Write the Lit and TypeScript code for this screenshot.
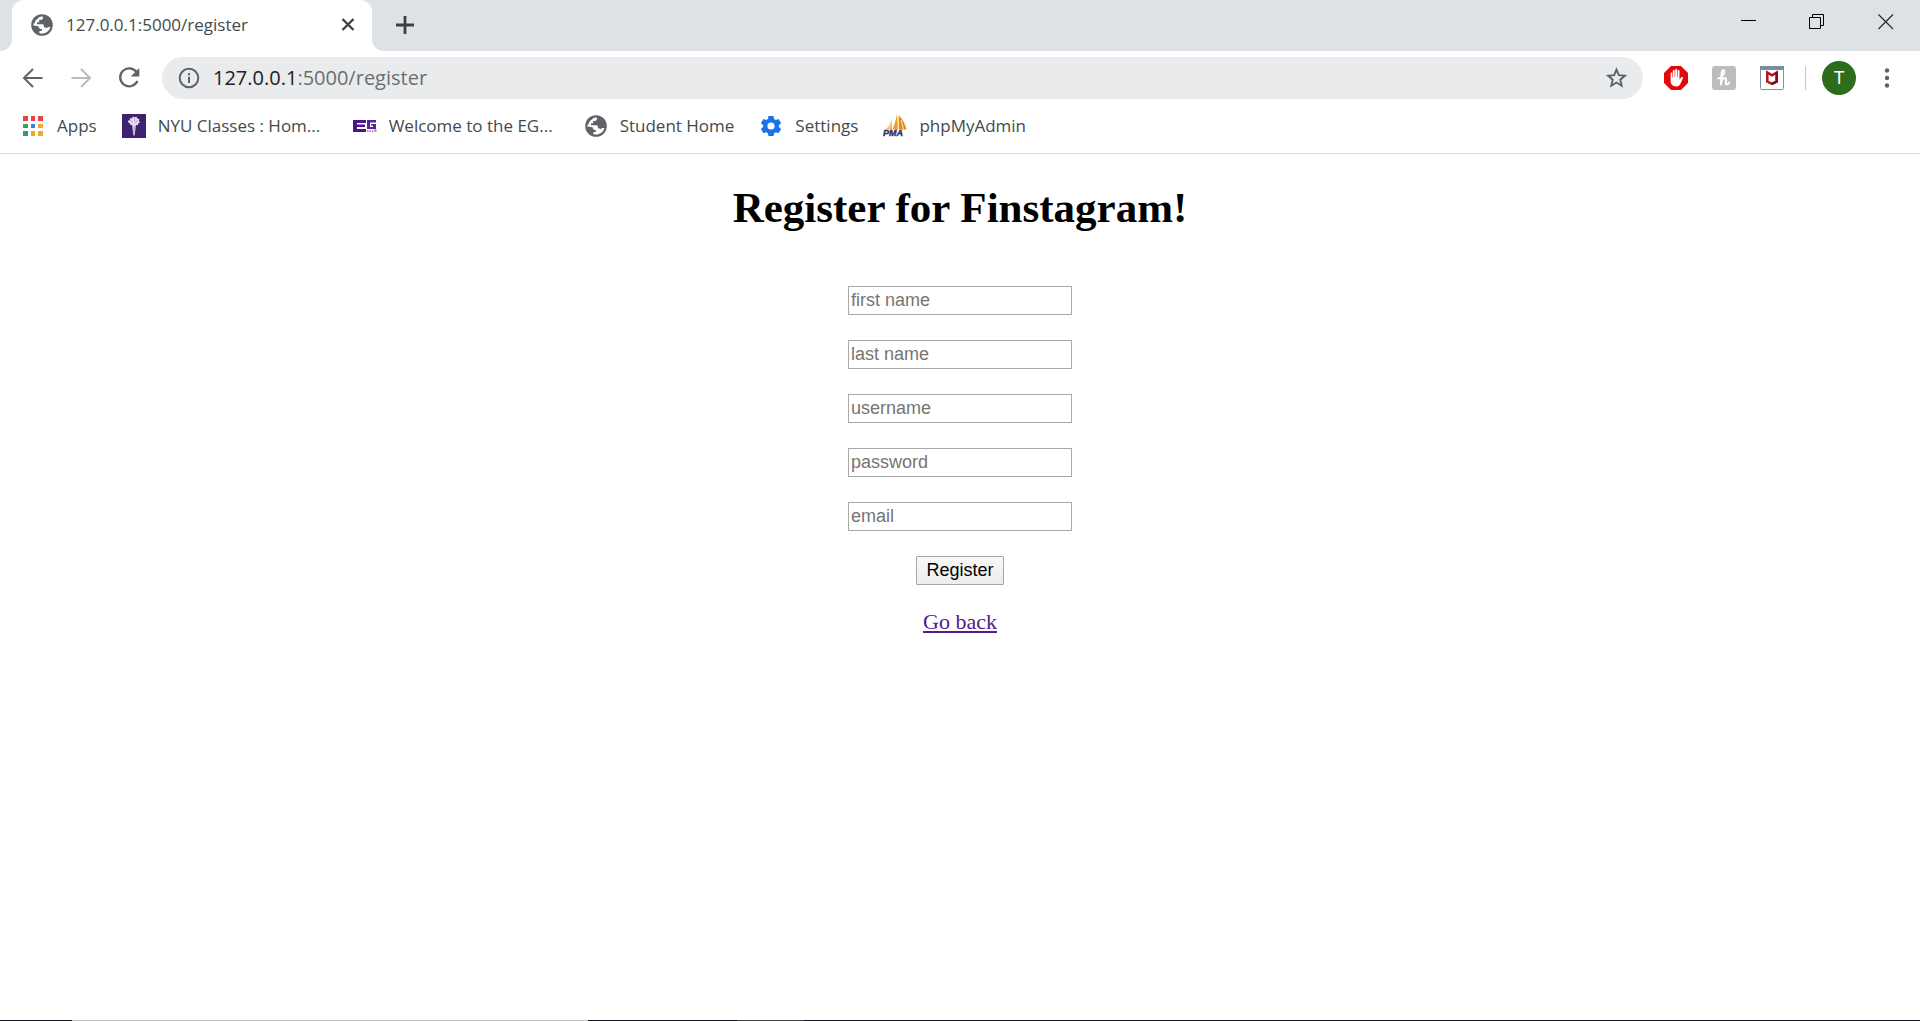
import { LitElement, html, css, svg, nothing } from "lit";
import { customElement, property } from "lit/decorators.js";

const globe = svg`
  <svg viewBox="0 0 24 24" width="24" height="24" aria-hidden="true">
    <circle cx="12" cy="12" r="10.8" fill="#5f6368" />
    <path fill="#fff" d="M12.800 3.400c.7 2-.3 3.600-2.300 3.600H9.200v2.300H7v1.900h5.300c1 0 1.600.6 1.600 1.500v1.500c1.200 0 2 .2 2.500 1 .9-.9 2.300-1.400 4-1.200-1 3.800-4.400 6.600-8.400 6.600-1 0-1.800-.1-2.600-.4v-2.300h2.400v-1.800c-1.900 0-3.200-1.100-3.200-2.900L3.400 12.600C3.100 7.600 7.200 3.200 12.800 3.400z" />
    <path fill="#5f6368" d="M3.200 10.500C3.900 6.600 6.300 4.300 9 3.600L8.400 5.300C6 6.300 4.700 8.400 4.600 10.500z" />
  </svg>`;

const appsIcon = svg`
  <svg viewBox="0 0 24 24" width="24" height="24" aria-hidden="true">
    <g fill="#ea4048"><path d="M2 2h5v5H2zM10 2h4v5h-4zM17 2h5v5h-5z" /></g>
    <g fill="#34a05a"><path d="M2 10h5v4H2zM2 17h5v5H2z" /></g>
    <path fill="#2a86dc" d="M10 10h4v4h-4z" />
    <g fill="#f4a825"><path d="M17 10h5v4h-5zM10 17h4v5h-4zM17 17h5v5h-5z" /></g>
  </svg>`;

const torchIcon = svg`
  <svg viewBox="0 0 24 24" width="24" height="24" aria-hidden="true">
    <path fill="#3f2170" d="M0 0h24v24H0z" />
    <path fill="#c9bedb" d="M10 11h4l-1.300 10.500h-1.400z" />
    <path fill="#e6dff0" d="M6.200 6.500 8 6.200 7.800 4l2 .4L11 2.300l1.600 1.300 1.700-1 .9 2 2.200.3-.6 2 1.500 1.400-1.900 1-.6 1.900-2.100-.2-1.700 1.200-1.600-1.300-2.100.2-.4-1.900-2-.9z" />
    <path stroke="#a794c4" fill="none" d="M8.500 6.500l2.500 2M12.500 4.500v3M15.500 6.500l-2 2.500" />
  </svg>`;

const egIcon = svg`
  <svg viewBox="0 0 24 24" width="24" height="24" aria-hidden="true">
    <path fill="#4b148a" d="M0 6h13v3H4v1.500h8v2.500H4v2h9v3H0z" />
    <path fill="#5a2496" d="M14 6h9v2.500h-6V13h3v-1.500h-2V10h5v5h-9z" />
    <path stroke="#a98cc9" stroke-width="2" fill="none" d="M14 17h1.500M16.500 17H18M19 17h1.500M22.500 15v3" />
  </svg>`;

const gearIcon = svg`
  <svg viewBox="0 0 24 24" width="24" height="24" aria-hidden="true">
    <path fill="#1a73e8" fill-rule="evenodd" d="M9.500 2h5l.6 2.900 1.700 1 2.800-1 2.500 4.300-2.200 1.900v1.900l2.200 1.900-2.500 4.300-2.800-1-1.700 1-.6 2.800h-5l-.6-2.800-1.700-1-2.800 1-2.500-4.300L4.100 13v-1.900L1.900 9.200l2.500-4.300 2.800 1 1.700-1zM12 8.400a3.600 3.600 0 1 0 0 7.200 3.600 3.600 0 0 0 0-7.200z" />
  </svg>`;

const pmaIcon = svg`
  <svg viewBox="0 0 24 24" width="24" height="24" aria-hidden="true">
    <path fill="#f3ae55" d="M8.500 3c.2 4-1.500 9-6 12.500H9z" />
    <path fill="#f39a1f" d="M14 0c-1 5-2.500 11-4.500 15.500H15z" />
    <path fill="#e88a12" d="M15.500 1.500c4 3 6.500 8.500 8 14H16z" />
    <path stroke="#fbe3c0" fill="none" d="M6 14.500l2-7M18 6l2.500 9" />
    <text x="0" y="22" font-family="Liberation Sans, sans-serif" font-size="9" font-weight="700" font-style="italic" fill="#2f2d68" stroke="#2f2d68" stroke-width=".4">PMA</text>
  </svg>`;

const backIcon = svg`
  <svg viewBox="0 0 24 24" width="24" height="24" aria-hidden="true">
    <path fill="none" stroke="currentColor" stroke-width="2" d="M21.500 12H3.500M12 3l-9 9 9 9" />
  </svg>`;

const forwardIcon = svg`
  <svg viewBox="0 0 24 24" width="24" height="24" aria-hidden="true">
    <path fill="none" stroke="currentColor" stroke-width="2" d="M2.500 12h18M12 3l9 9-9 9" />
  </svg>`;

const reloadIcon = svg`
  <svg viewBox="0 0 24 24" width="24" height="24" aria-hidden="true">
    <path fill="none" stroke="currentColor" stroke-width="2.300" d="M19.800 6.500A9 9 0 1 0 20.400 15" />
    <path fill="currentColor" d="M22.300 2v8.600h-8.600z" />
  </svg>`;

const infoIcon = svg`
  <svg viewBox="0 0 24 24" width="24" height="24" aria-hidden="true">
    <circle cx="12" cy="12" r="9.300" fill="none" stroke="#5f6368" stroke-width="2" />
    <path fill="#5f6368" d="M11 7h2v2.200h-2zM11 10.800h2V17h-2z" />
  </svg>`;

const starIcon = svg`
  <svg viewBox="0 0 24 24" width="24" height="24" aria-hidden="true">
    <path fill="none" stroke="#5f6368" stroke-width="1.900" d="M12.500 3.600l2.300 5.600 6.100.5-4.600 4 1.400 6-5.200-3.200-5.200 3.200 1.400-6-4.600-4 6.100-.5z" />
  </svg>`;

const blockIcon = svg`
  <svg viewBox="0 0 24 24" width="24" height="24" aria-hidden="true">
    <path fill="#e4080a" d="M7 0h10l7 7v10l-7 7H7l-7-7V7z" />
    <path fill="#fff" d="M6.600 7.500c0-1.400 1.700-1.400 1.700 0v4h.5V5c0-1.500 1.900-1.500 1.900 0v6h.5V3.900c0-1.500 1.900-1.500 1.900 0V11h.5V5c0-1.500 1.900-1.500 1.900 0v8.500l1.500-2c.8-1 2.400-.4 1.900.9l-2.600 5.700c-.7 1.500-1.900 2.300-3.800 2.300-3.900 0-5.900-2-5.900-5.900z" />
  </svg>`;

const honeyIcon = svg`
  <svg viewBox="0 0 24 24" width="24" height="24" aria-hidden="true">
    <rect width="24" height="24" rx="3" fill="#bdbdbd" />
    <path fill="none" stroke="#fff" stroke-width="2" stroke-linecap="round" stroke-linejoin="round" d="M6.300 12.500c3-.5 6.800-4.500 6-7.500-.5-1.500-2.300-1-2.500 1.200L8.800 18.500c.5-3.500 2.200-6.500 4.300-6.500 2.500 0-.8 6.500 1.600 6.500 1 0 1.700-.7 2.500-1.800" />
  </svg>`;

const shieldIcon = svg`
  <svg viewBox="0 0 24 24" width="24" height="24" aria-hidden="true">
    <rect x=".5" y=".5" width="23" height="23" rx="1" fill="#fff" stroke="#8095a0" />
    <path fill="#78909c" d="M0 0h24v4H0z" />
    <path fill="none" stroke="#b51220" stroke-width="2.500" d="M7.300 6.500v9l4.700 2.400 4.700-2.400v-9L12 9.300z" />
    <path fill="none" stroke="#7e0d18" stroke-width="2.500" d="M12 17.900l4.700-2.400v-9" />
  </svg>`;

const menuIcon = svg`
  <svg viewBox="0 0 24 24" width="24" height="24" aria-hidden="true">
    <g fill="#5f6368"><circle cx="12" cy="4.500" r="2.200" /><circle cx="12" cy="12" r="2.200" /><circle cx="12" cy="19.500" r="2.200" /></g>
  </svg>`;

const minimizeIcon = svg`
  <svg viewBox="0 0 16 16" width="16" height="16" aria-hidden="true"><path fill="#000" d="M1 6h15v1H1z" /></svg>`;

const restoreIcon = svg`
  <svg viewBox="0 0 16 16" width="16" height="16" aria-hidden="true">
    <path fill="none" stroke="#000" d="M.5 3.500h11v11H.5zM3.500 3.500v-3h11v11h-3" />
  </svg>`;

const closeIcon = svg`
  <svg viewBox="0 0 16 16" width="16" height="16" aria-hidden="true">
    <path fill="none" stroke="#222" stroke-width="1.100" d="M.5.5l14.500 14.500M15 .5L.5 15" />
  </svg>`;

const tabCloseIcon = svg`
  <svg viewBox="0 0 16 16" width="16" height="16" aria-hidden="true">
    <path fill="none" stroke="#3c4043" stroke-width="2.300" d="M2.500 2l11 11M13.500 2l-11 11" />
  </svg>`;

const plusIcon = svg`
  <svg viewBox="0 0 18 18" width="18" height="18" aria-hidden="true">
    <path fill="none" stroke="#3c4043" stroke-width="2.800" d="M9 0v18M0 9h18" />
  </svg>`;

const uiFont = css`"Open Sans", "Noto Sans", sans-serif`;

@customElement("browser-tabs")
export class BrowserTabs extends LitElement {
  static styles = css`
    :host { display: block; background: #dee1e6; font-family: ${uiFont}; }
    .strip { display: flex; height: 51px; align-items: stretch; }
    .corner { width: 12px; background: #fff; flex: none; }
    .fill { height: 100%; background: #dee1e6; }
    .fill.left { border-bottom-right-radius: 12px; }
    .fill.right { border-bottom-left-radius: 12px; }
    .tab {
      display: flex; align-items: center; gap: 12px;
      flex: 0 1 360px; min-width: 0; box-sizing: border-box;
      padding: 0 16px 2px 18px; background: #fff; border-radius: 12px 12px 0 0;
    }
    .title { flex: 1; font-size: 17px; line-height: 24px; color: #45494d; white-space: nowrap; overflow: hidden; }
    svg { display: block; flex: none; }
    button { border: 0; padding: 0; background: none; display: grid; place-items: center; }
    .add { width: 42px; padding-bottom: 2px; }
    .windows { display: flex; margin-left: auto; height: 43px; }
    .windows button { width: 69px; }
  `;

  render() {
    return html`
      <div class="strip">
        <div class="corner"><div class="fill left"></div></div>
        <div class="tab">
          ${globe}
          <span class="title">127.0.0.1:5000/register</span>
          <button aria-label="Close tab">${tabCloseIcon}</button>
        </div>
        <div class="corner"><div class="fill right"></div></div>
        <button class="add" aria-label="New tab">${plusIcon}</button>
        <div class="windows">
          <button aria-label="Minimize">${minimizeIcon}</button>
          <button aria-label="Restore">${restoreIcon}</button>
          <button aria-label="Close">${closeIcon}</button>
        </div>
      </div>`;
  }
}

@customElement("browser-toolbar")
export class BrowserToolbar extends LitElement {
  static styles = css`
    :host { display: block; font-family: ${uiFont}; }
    .bar { display: flex; align-items: center; gap: 24px; padding: 6px 21px 0; }
    button { border: 0; padding: 0; background: none; display: grid; place-items: center; color: #5f6368; flex: none; }
    button[disabled] { color: #b9bbbe; }
    svg { display: block; }
    .address {
      flex: 1; min-width: 0; display: flex; align-items: center; gap: 12px;
      height: 42px; box-sizing: border-box; margin: 0 -3px;
      padding: 0 15px; border-radius: 21px; background: #e9ebec;
    }
    .url { flex: 1; font-size: 20px; line-height: 26px; color: #6b6f73; white-space: nowrap; overflow: hidden; }
    .host { color: #202124; }
    .line { width: 1px; height: 24px; margin-left: -3px; margin-right: -8px; background: #c4c8cc; }
    .avatar {
      width: 34px; height: 34px; border-radius: 50%; margin-right: -5px;
      background: #2f6b1d; color: #fff; font: 18px/34px Roboto, sans-serif;
    }
  `;

  render() {
    return html`
      <div class="bar">
        <button aria-label="Back">${backIcon}</button>
        <button aria-label="Forward" disabled>${forwardIcon}</button>
        <button aria-label="Reload">${reloadIcon}</button>
        <div class="address">
          <button aria-label="Site information">${infoIcon}</button>
          <span class="url"><span class="host">127.0.0.1</span>:5000/register</span>
          <button aria-label="Bookmark this page">${starIcon}</button>
        </div>
        <button aria-label="Content blocker">${blockIcon}</button>
        <button aria-label="Coupons">${honeyIcon}</button>
        <button aria-label="Site advisor">${shieldIcon}</button>
        <span class="line"></span>
        <button class="avatar">T</button>
        <button aria-label="Menu">${menuIcon}</button>
      </div>`;
  }
}

const bookmarks = [
  { label: "Apps", icon: appsIcon },
  { label: "NYU Classes : Hom...", icon: torchIcon, long: true },
  { label: "Welcome to the EG...", icon: egIcon, long: true },
  { label: "Student Home", icon: globe },
  { label: "Settings", icon: gearIcon },
  { label: "phpMyAdmin", icon: pmaIcon },
];

@customElement("bookmark-bar")
export class BookmarkBar extends LitElement {
  static styles = css`
    :host { display: block; font-family: ${uiFont}; border-bottom: 1px solid #d9dadb; }
    nav { display: flex; align-items: center; gap: 25px; height: 54px; padding: 0 21px; }
    a { display: flex; align-items: center; gap: 12px; color: #45494d; text-decoration: none; font-size: 17px; line-height: 24px; white-space: nowrap; }
    .long { min-width: 170px; }
    svg { display: block; flex: none; }
  `;

  render() {
    return html`<nav>
      ${bookmarks.map((b) => html`<a href="#">${b.icon}<span class=${b.long ? "long" : nothing}>${b.label}</span></a>`)}
    </nav>`;
  }
}

@customElement("register-page")
export class RegisterPage extends LitElement {
  @property({ attribute: false }) fields = [
    { name: "first name", type: "text" },
    { name: "last name", type: "text" },
    { name: "username", type: "text" },
    { name: "password", type: "password" },
    { name: "email", type: "email" },
  ];

  static styles = css`
    :host { display: block; font-family: "Liberation Serif", serif; color: #000; }
    main { display: flex; flex-direction: column; align-items: center; padding: 29px 11px; }
    h1 { margin: 0 0 53px; font-size: 43px; line-height: 50px; }
    form { display: flex; flex-direction: column; align-items: center; gap: 25px; margin-bottom: 25px; }
    input {
      width: 224px; height: 29px; box-sizing: border-box; padding: 1px 2px; margin: 0;
      border: 1px solid #a9a9a9; background: #fff; font: 18px "Liberation Sans", sans-serif;
    }
    input::placeholder { color: #757575; }
    button {
      height: 29px; padding: 0 9px; border: 1px solid #a6a6a6; border-radius: 1px;
      background: linear-gradient(#f8f8f8, #ececec); color: #000; font: 18px "Liberation Sans", sans-serif;
    }
    a { color: #551a8b; font-size: 22px; line-height: 24px; }
  `;

  render() {
    return html`<main>
      <h1>Register for Finstagram!</h1>
      <form @submit=${(e: Event) => e.preventDefault()}>
        ${this.fields.map((f) => html`<input type=${f.type} name=${f.name} placeholder=${f.name} aria-label=${f.name} />`)}
        <button type="submit">Register</button>
      </form>
      <a href="#">Go back</a>
    </main>`;
  }
}

@customElement("app-root")
export class AppRoot extends LitElement {
  static styles = css`
    :host { display: flex; flex-direction: column; min-height: 100vh; background: #fff; }
    register-page { flex: 1; }
    .taskbar { height: 1px; background: linear-gradient(to right, #17121c 72px, #c2c2c2 72px 588px, #17121c 588px 737px, #444047 737px 804px, #17121c 804px); }
  `;

  render() {
    return html`
      <browser-tabs></browser-tabs>
      <browser-toolbar></browser-toolbar>
      <bookmark-bar></bookmark-bar>
      <register-page></register-page>
      <div class="taskbar"></div>`;
  }
}
